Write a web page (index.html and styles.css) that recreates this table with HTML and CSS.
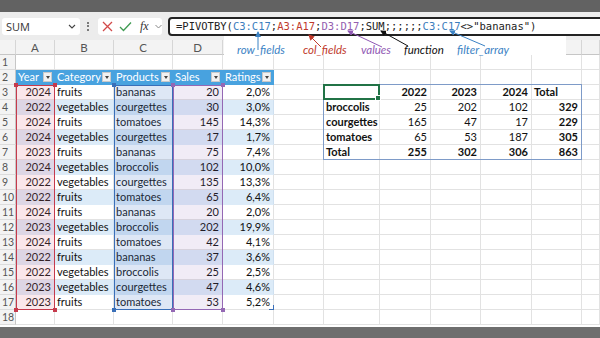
FILE: index.html
```html
<!DOCTYPE html>
<html>
<head>
<meta charset="utf-8">
<link rel="stylesheet" href="styles.css">
</head>
<body>
<div class="app">
  <div class="topbar"></div>
  <div class="fbar">
    <div class="namebox"><span>SUM</span>
      <svg class="chev" width="8" height="5" viewBox="0 0 8 5"><path d="M1 1 L4 4 L7 1" fill="none" stroke="#444" stroke-width="1.1"/></svg>
    </div>
    <div class="dots"><i></i><i></i><i></i></div>
    <div class="btns">
      <svg width="11" height="11" viewBox="0 0 11 11"><path d="M1 1 L10 10 M10 1 L1 10" stroke="#d24a4a" stroke-width="1.3"/></svg>
      <svg width="13" height="11" viewBox="0 0 13 11"><path d="M1 6 L4.5 9.5 L12 1.5" fill="none" stroke="#3f9b52" stroke-width="1.3"/></svg>
      <span class="fx">fx</span>
      <svg width="7" height="5" viewBox="0 0 7 5"><path d="M0.5 1 L3.5 4 L6.5 1" fill="none" stroke="#888" stroke-width="1"/></svg>
    </div>
    <div class="formula"><span>=PIVOTBY(</span><span class="fb">C3:C17</span><span>;</span><span class="fr">A3:A17</span><span>;</span><span class="fp">D3:D17</span><span>;SUM;;;;;;</span><span class="fb">C3:C17</span><span>&lt;&gt;"bananas")</span></div>
  </div>

  <div class="sheet">
    <div class="corner"></div><div class="ch">A</div><div class="ch">B</div><div class="ch">C</div><div class="ch">D</div><div class="ch"></div><div class="ch"></div><div class="ch"></div><div class="ch"></div><div class="ch"></div><div class="ch"></div><div class="ch"></div><div class="ch last"></div>

    <div class="row"><div class="rh">1</div><div class="c"></div><div class="c"></div><div class="c"></div><div class="c"></div><div class="c"></div><div class="c"></div><div class="c"></div><div class="c"></div><div class="c"></div><div class="c"></div><div class="c"></div><div class="c"></div></div>

    <div class="row"><div class="rh">2</div>
      <div class="c th"><span>Year</span><i class="fbtn"></i></div>
      <div class="c th"><span>Category</span><i class="fbtn"></i></div>
      <div class="c th"><span>Products</span><i class="fbtn"></i></div>
      <div class="c th"><span>Sales</span><i class="fbtn"></i></div>
      <div class="c th"><span>Ratings</span><i class="fbtn"></i></div>
      <div class="c"></div><div class="c"></div><div class="c"></div><div class="c"></div><div class="c"></div><div class="c"></div><div class="c"></div></div>

    <div class="row"><div class="rh">3</div><div class="c n">2024</div><div class="c">fruits</div><div class="c">bananas</div><div class="c n">20</div><div class="c n">2,0%</div><div class="c"></div>
      <div class="c"></div><div class="c n b">2022</div><div class="c n b">2023</div><div class="c n b">2024</div><div class="c b">Total</div><div class="c"></div></div>

    <div class="row band"><div class="rh">4</div><div class="c n">2022</div><div class="c">vegetables</div><div class="c">courgettes</div><div class="c n">30</div><div class="c n">3,0%</div><div class="c"></div>
      <div class="c b">broccolis</div><div class="c n">25</div><div class="c n">202</div><div class="c n">102</div><div class="c n b">329</div><div class="c"></div></div>

    <div class="row"><div class="rh">5</div><div class="c n">2024</div><div class="c">fruits</div><div class="c">tomatoes</div><div class="c n">145</div><div class="c n">14,3%</div><div class="c"></div>
      <div class="c b">courgettes</div><div class="c n">165</div><div class="c n">47</div><div class="c n">17</div><div class="c n b">229</div><div class="c"></div></div>

    <div class="row band"><div class="rh">6</div><div class="c n">2024</div><div class="c">vegetables</div><div class="c">courgettes</div><div class="c n">17</div><div class="c n">1,7%</div><div class="c"></div>
      <div class="c b">tomatoes</div><div class="c n">65</div><div class="c n">53</div><div class="c n">187</div><div class="c n b">305</div><div class="c"></div></div>

    <div class="row"><div class="rh">7</div><div class="c n">2023</div><div class="c">fruits</div><div class="c">bananas</div><div class="c n">75</div><div class="c n">7,4%</div><div class="c"></div>
      <div class="c b">Total</div><div class="c n b">255</div><div class="c n b">302</div><div class="c n b">306</div><div class="c n b">863</div><div class="c"></div></div>

    <div class="row band"><div class="rh">8</div><div class="c n">2024</div><div class="c">vegetables</div><div class="c">broccolis</div><div class="c n">102</div><div class="c n">10,0%</div><div class="c"></div><div class="c"></div><div class="c"></div><div class="c"></div><div class="c"></div><div class="c"></div><div class="c"></div></div>

    <div class="row"><div class="rh">9</div><div class="c n">2022</div><div class="c">vegetables</div><div class="c">courgettes</div><div class="c n">135</div><div class="c n">13,3%</div><div class="c"></div><div class="c"></div><div class="c"></div><div class="c"></div><div class="c"></div><div class="c"></div><div class="c"></div></div>

    <div class="row band"><div class="rh">10</div><div class="c n">2022</div><div class="c">fruits</div><div class="c">tomatoes</div><div class="c n">65</div><div class="c n">6,4%</div><div class="c"></div><div class="c"></div><div class="c"></div><div class="c"></div><div class="c"></div><div class="c"></div><div class="c"></div></div>

    <div class="row"><div class="rh">11</div><div class="c n">2024</div><div class="c">fruits</div><div class="c">bananas</div><div class="c n">20</div><div class="c n">2,0%</div><div class="c"></div><div class="c"></div><div class="c"></div><div class="c"></div><div class="c"></div><div class="c"></div><div class="c"></div></div>

    <div class="row band"><div class="rh">12</div><div class="c n">2023</div><div class="c">vegetables</div><div class="c">broccolis</div><div class="c n">202</div><div class="c n">19,9%</div><div class="c"></div><div class="c"></div><div class="c"></div><div class="c"></div><div class="c"></div><div class="c"></div><div class="c"></div></div>

    <div class="row"><div class="rh">13</div><div class="c n">2024</div><div class="c">fruits</div><div class="c">tomatoes</div><div class="c n">42</div><div class="c n">4,1%</div><div class="c"></div><div class="c"></div><div class="c"></div><div class="c"></div><div class="c"></div><div class="c"></div><div class="c"></div></div>

    <div class="row band"><div class="rh">14</div><div class="c n">2022</div><div class="c">fruits</div><div class="c">bananas</div><div class="c n">37</div><div class="c n">3,6%</div><div class="c"></div><div class="c"></div><div class="c"></div><div class="c"></div><div class="c"></div><div class="c"></div><div class="c"></div></div>

    <div class="row"><div class="rh">15</div><div class="c n">2022</div><div class="c">vegetables</div><div class="c">broccolis</div><div class="c n">25</div><div class="c n">2,5%</div><div class="c"></div><div class="c"></div><div class="c"></div><div class="c"></div><div class="c"></div><div class="c"></div><div class="c"></div></div>

    <div class="row band"><div class="rh">16</div><div class="c n">2023</div><div class="c">vegetables</div><div class="c">courgettes</div><div class="c n">47</div><div class="c n">4,6%</div><div class="c"></div><div class="c"></div><div class="c"></div><div class="c"></div><div class="c"></div><div class="c"></div><div class="c"></div></div>

    <div class="row"><div class="rh">17</div><div class="c n">2023</div><div class="c">fruits</div><div class="c">tomatoes</div><div class="c n">53</div><div class="c n">5,2%</div><div class="c"></div><div class="c"></div><div class="c"></div><div class="c"></div><div class="c"></div><div class="c"></div><div class="c"></div></div>

    <div class="row"><div class="rh">18</div><div class="c"></div><div class="c"></div><div class="c"></div><div class="c"></div><div class="c"></div><div class="c"></div><div class="c"></div><div class="c"></div><div class="c"></div><div class="c"></div><div class="c"></div><div class="c"></div></div>

    <div class="range rng-a"><i class="h tl"></i><i class="h tr"></i><i class="h bl"></i><i class="h br"></i></div>
    <div class="range rng-c"><i class="h tl"></i><i class="h tr"></i><i class="h bl"></i><i class="h br"></i></div>
    <div class="range rng-d"><i class="h tl"></i><i class="h tr"></i><i class="h bl"></i><i class="h br"></i></div>
    <div class="resize"></div>
    <div class="pivot"></div>
    <div class="sel"><i class="fill"></i></div>
  </div>
  <div class="gap"></div>
  <div class="bottombar"></div>

  <div class="notes">
    <span class="lbl l-row">row_fields</span>
    <span class="lbl l-col">col_fields</span>
    <span class="lbl l-val">values</span>
    <span class="lbl l-fn">function</span>
    <span class="lbl l-flt">filter_array</span>
  </div>

  <svg class="arrows" width="600" height="338" viewBox="0 0 600 338">
    <defs>
      <marker id="mb" markerWidth="6" markerHeight="6" refX="5" refY="3" orient="auto" markerUnits="userSpaceOnUse"><path d="M0 0 L6 3 L0 6 Z" fill="#3b82c4"/></marker>
      <marker id="mr" markerWidth="6" markerHeight="6" refX="5" refY="3" orient="auto" markerUnits="userSpaceOnUse"><path d="M0 0 L6 3 L0 6 Z" fill="#c0392b"/></marker>
      <marker id="mp" markerWidth="6" markerHeight="6" refX="5" refY="3" orient="auto" markerUnits="userSpaceOnUse"><path d="M0 0 L6 3 L0 6 Z" fill="#9058b4"/></marker>
      <marker id="mk" markerWidth="6" markerHeight="6" refX="5" refY="3" orient="auto" markerUnits="userSpaceOnUse"><path d="M0 0 L6 3 L0 6 Z" fill="#111"/></marker>
    </defs>
    <line x1="258" y1="50" x2="258" y2="32" stroke="#3b82c4" stroke-width="1" marker-end="url(#mb)"/>
    <line x1="321" y1="47" x2="309" y2="35" stroke="#c0392b" stroke-width="1" marker-end="url(#mr)"/>
    <line x1="382" y1="47" x2="348" y2="31" stroke="#9058b4" stroke-width="1" marker-end="url(#mp)"/>
    <line x1="408" y1="46" x2="381" y2="31" stroke="#111" stroke-width="1" marker-end="url(#mk)"/>
    <line x1="485" y1="46" x2="450" y2="31" stroke="#3b82c4" stroke-width="1" marker-end="url(#mb)"/>
  </svg>
</div>
</body>
</html>
```
FILE: styles.css
```css
body {
  margin: 0;
  width: 600px;
  height: 338px;
  overflow: hidden;
  font-family: Lato, "Open Sans", sans-serif;
}
.app {
  position: relative;
  width: 600px;
  height: 338px;
  overflow: hidden;
  background: #fff;
}
.topbar {
  height: 12px;
  background: #626262;
}
.fbar {
  height: 28px;
  background: #ececec;
  display: flex;
  align-items: center;
}
.namebox {
  margin-left: 2px;
  width: 78px;
  height: 17px;
  box-sizing: border-box;
  background: #fff;
  border-radius: 3px;
  display: flex;
  align-items: center;
  justify-content: space-between;
  padding: 0 4px 0 4px;
  font: 11px "Open Sans", sans-serif;
  color: #333;
}
.dots {
  margin-left: 6px;
  width: 4px;
  display: flex;
  flex-direction: column;
  align-items: center;
  gap: 1.5px;
}
.dots i {
  width: 2px;
  height: 2px;
  border-radius: 1px;
  background: #555;
}
.btns {
  margin-left: 8px;
  width: 64px;
  height: 17px;
  box-sizing: border-box;
  background: #fff;
  border-radius: 3px;
  display: flex;
  align-items: center;
  padding-left: 4px;
  gap: 6px;
}
.fx {
  font: italic 12px "Liberation Serif", serif;
  color: #333;
  margin-left: 2px;
}
.formula {
  margin-left: 6px;
  flex: 1;
  margin-right: -12px;
  height: 19px;
  box-sizing: border-box;
  border: 2px solid #222;
  border-radius: 4px;
  background: #fff;
  display: flex;
  align-items: center;
  padding-left: 6px;
  font: 10.5px "DejaVu Sans Mono", monospace;
  color: #222;
  white-space: pre;
}
.formula .fb { color: #3b7dbd; }
.formula .fr { color: #c0392b; }
.formula .fp { color: #9460b0; }

.sheet {
  position: relative;
  display: grid;
  grid-template-columns: 16px 39px 59px 59px 50px 51px 50px 56px 51px 50px 51px 50px 1fr;
  grid-auto-rows: 15px;
  font-size: 11px;
  color: #111;
}
.row { display: contents; }
.corner, .ch {
  background: #f3f3f3;
  border-right: 1px solid #d6d6d6;
  border-bottom: 1px solid #c6c6c6;
  box-sizing: border-box;
}
.ch {
  text-align: center;
  color: #555;
  line-height: 15px;
  font-size: 11.5px;
}
.rh {
  background: #f3f3f3;
  border-right: 1px solid #c6c6c6;
  border-bottom: 1px solid #dcdcdc;
  box-sizing: border-box;
  color: #555;
  padding-left: 2px;
  line-height: 14px;
  font-size: 10.5px;
}
.c {
  border-right: 1px solid #e2e2e2;
  border-bottom: 1px solid #e2e2e2;
  box-sizing: border-box;
  padding: 0 2px;
  line-height: 14px;
  white-space: nowrap;
  overflow: hidden;
}
.c.n { text-align: right; padding-right: 3px; }
.c.b { font-weight: 700; }
.c.th {
  background: #48a2df;
  border-right-color: #48a2df;
  border-bottom-color: #48a2df;
  color: #fff;
  display: flex;
  align-items: center;
  justify-content: space-between;
  padding-right: 2px;
}
.fbtn {
  width: 9px;
  height: 10px;
  box-sizing: border-box;
  background: #f1f1f1;
  border: 1px solid #c9c9c9;
  display: flex;
  align-items: center;
  justify-content: center;
}
.fbtn::after {
  content: "";
  border-left: 2.5px solid transparent;
  border-right: 2.5px solid transparent;
  border-top: 3px solid #444;
}
.band .c:nth-child(-n+6) {
  background: #dcebf8;
  border-bottom-color: #dcebf8;
  border-right-color: #cfe0f0;
}

.range {
  position: absolute;
  inset: 0;
  grid-row: 4 / 19;
  box-sizing: border-box;
}
.rng-a {
  grid-column: 2 / 3;
  background: rgba(228, 110, 135, 0.17);
  border: 1.5px solid #c63a4c;
}
.rng-c {
  grid-column: 4 / 5;
  background: rgba(70, 120, 200, 0.18);
  border: 1.5px solid #3a6fb8;
}
.rng-d {
  grid-column: 5 / 6;
  background: rgba(150, 110, 185, 0.13);
  border: 1.5px solid #9468b4;
}
.range .h {
  position: absolute;
  width: 4px;
  height: 4px;
}
.rng-a .h { background: #c63a4c; }
.rng-c .h { background: #3a6fb8; }
.rng-d .h { background: #9468b4; }
.h.tl { left: -3px; top: -3px; }
.h.tr { right: -3px; top: -3px; }
.h.bl { left: -3px; bottom: -3px; }
.h.br { right: -3px; bottom: -3px; }
.resize {
  position: absolute;
  grid-column: 6 / 7;
  grid-row: 18 / 19;
  right: 0;
  bottom: 0;
  width: 4px;
  height: 4px;
  border-right: 1.5px solid #3a6fb8;
  border-bottom: 1.5px solid #3a6fb8;
}
.pivot {
  position: absolute;
  inset: -1px 0 0 -1px;
  grid-column: 8 / 13;
  grid-row: 4 / 9;
  border: 1px solid #7e9bc8;
}
.sel {
  position: absolute;
  inset: -1px 0 0 -1px;
  grid-column: 8 / 9;
  grid-row: 4 / 5;
  border: 2px solid #217346;
}
.sel .fill {
  position: absolute;
  right: -3px;
  bottom: -3px;
  width: 4px;
  height: 4px;
  background: #217346;
  border: 1px solid #fff;
}
.gap { height: 2px; background: #fff; }
.bottombar { height: 11px; background: #6e6e6e; }

.notes {
  position: absolute;
  left: 224px;
  top: 36px;
  width: 342px;
  height: 19px;
  background: #fff;
  display: flex;
  align-items: flex-start;
  padding-top: 8px;
  box-sizing: border-box;
  font: italic 11.5px Lato, sans-serif;
  line-height: 12px;
}
.lbl { white-space: nowrap; }
.l-row { margin-left: 13px; width: 66px; color: #3b82c4; }
.l-col { width: 58px; color: #c0392b; }
.l-val { width: 43px; color: #9058b4; }
.l-fn { width: 53px; color: #111; }
.l-flt { color: #3b82c4; }
.arrows {
  position: absolute;
  left: 0;
  top: 0;
  pointer-events: none;
}
```
